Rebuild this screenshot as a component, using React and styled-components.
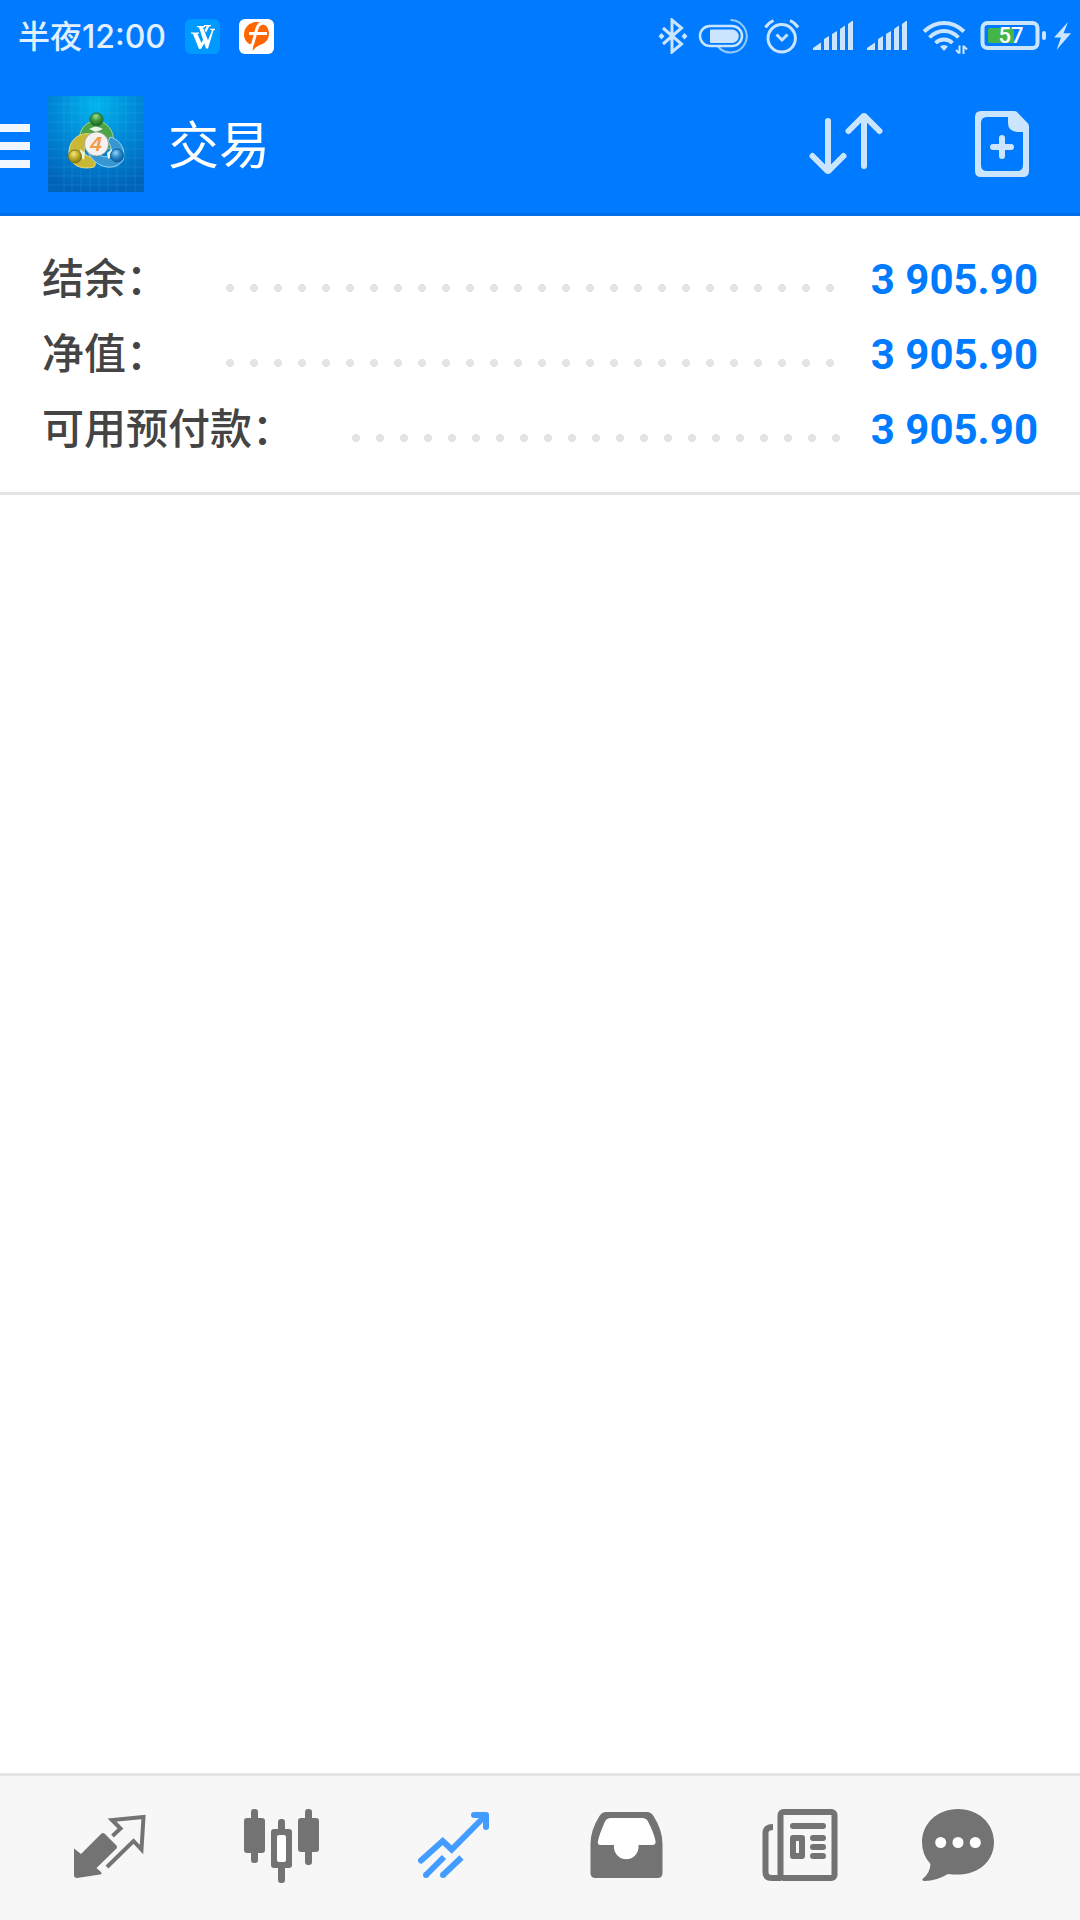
import React from "react";
import styled, { createGlobalStyle } from "styled-components";

// full-width colon after each label
const COLON = "\uFF1A";

const rows = [
  { label: "结余", value: "3 905.90" },
  { label: "净值", value: "3 905.90" },
  { label: "可用预付款", value: "3 905.90" },
];

const tabs = [
  { name: "行情", icon: QuotesIcon },
  { name: "图表", icon: ChartIcon },
  { name: "交易", icon: TradeIcon, active: true },
  { name: "历史", icon: InboxIcon },
  { name: "新闻", icon: NewsIcon },
  { name: "消息", icon: ChatIcon },
];

export default function App() {
  return (
    <Page lang="zh-CN">
      <GlobalStyle />
      <StatusBar>
        <StatusGroup $gap="19px">
          <Clock>半夜12:00</Clock>
          <WIcon />
          <FIcon />
        </StatusGroup>
        <StatusGroup $gap="8px">
          <BluetoothIcon />
          <ToggleIcon />
          <AlarmIcon />
          <SignalIcon />
          <SignalIcon />
          <WifiIcon />
          <BatteryIcon />
          <BoltIcon />
        </StatusGroup>
      </StatusBar>
      <AppBar>
        <MenuButton type="button" aria-label="菜单">
          <MenuBars>
            <span />
            <span />
            <span />
          </MenuBars>
          <AppLogo />
        </MenuButton>
        <h1>交易</h1>
        <ActionButton type="button" aria-label="排序">
          <SortIcon />
        </ActionButton>
        <ActionButton type="button" aria-label="新订单">
          <NewOrderIcon />
        </ActionButton>
      </AppBar>
      <Summary>
        {rows.map((row) => (
          <SummaryRow key={row.label}>
            <dt>{row.label + COLON}</dt>
            <Dots aria-hidden="true" />
            <dd>{row.value}</dd>
          </SummaryRow>
        ))}
      </Summary>
      <Content />
      <TabBar>
        {tabs.map(({ name, icon: Icon, active }) => (
          <TabButton
            key={name}
            type="button"
            aria-label={name}
            aria-current={active ? "page" : undefined}
            $active={active}
          >
            <Icon />
          </TabButton>
        ))}
      </TabBar>
    </Page>
  );
}

/* Status bar icons */

function WIcon() {
  return (
    <svg width="35" height="35" viewBox="0 0 35 35">
      <rect width="35" height="35" rx="6" fill="#0099ff" />
      <path
        fill="#fff"
        d="M6 13.500h8v1l-1.500.5l4 9l3-6.500l2 3l-5.500 9.500h-2L8 15l-2-.5Z"
      />
      <path
        fill="#fff"
        d="M12 7h8v1l-2 .7l5 12.500l4-10l-2-.5v-1h5v1l-1.500.7L23 29.500h-2L14 8.500l-2-.5ZM19 6h7v1l-2 .7l-3 6l-1.500-3L22 7.500l-3-.5Z"
      />
    </svg>
  );
}

function FIcon() {
  return (
    <svg width="35" height="35" viewBox="0 0 35 35">
      <rect width="35" height="35" rx="6" fill="#fff" />
      <path
        fill="#ff6600"
        d="M18 3c7 0 12 5 12 11.500c0 6-4 10-9 11.500c-3 1-5 3-7.500 6c.5-3 1-4 .5-5.500C8.500 25 5 21 5 15.500C5 8 11 3 18 3Z"
      />
      <path
        fill="none"
        stroke="#fff"
        strokeWidth="3"
        d="M28 5c-6-2-9 0-10.500 6L14 24c-1 3-3 4-6 4M10 14.500h18"
      />
    </svg>
  );
}

function BluetoothIcon() {
  return (
    <svg width="32" height="36" viewBox="0 0 32 36">
      <path
        d="M7 10L25.500 26L16 34V2L25.500 10L7 26"
        fill="none"
        stroke="currentColor"
        strokeWidth="3"
      />
      <path
        d="M5.500 15l3 3.300l-3 3.300l-3-3.300ZM28.500 15l3 3.300l-3 3.300l-3-3.300Z"
        fill="currentColor"
      />
    </svg>
  );
}

function ToggleIcon() {
  return (
    <svg width="60" height="36" viewBox="0 0 60 36" fill="none" stroke="currentColor">
      <path d="M34.500 2A16.200 16.200 0 1 1 22 28.500" strokeWidth="2" opacity="0.750" />
      <rect x="4" y="8" width="42" height="20" rx="10" strokeWidth="2.500" fill="#007aff" />
      <path
        d="M15 11.500h21a6.700 6.700 0 0 1 0 13.400H15a1 1 0 0 1-1-1V12.500a1 1 0 0 1 1-1Z"
        fill="currentColor"
        stroke="none"
      />
    </svg>
  );
}

function AlarmIcon() {
  return (
    <svg width="36" height="36" viewBox="0 0 36 36" fill="none" stroke="currentColor" strokeWidth="3">
      <circle cx="17.700" cy="20.300" r="13.700" />
      <path d="M12.500 16.500l5.500 5.500l5.500-5.500M1.500 9.500Q4 5 9.500 2.500M34 9.500Q31.500 5 26 2.500" />
    </svg>
  );
}

function SignalIcon() {
  return (
    <svg width="46" height="36" viewBox="0 0 46 36" fill="currentColor">
      <path d="M5 32v-2l8-5.500v7.500ZM16 32v-11l5-3v14ZM24 32v-16l5-3v19ZM32 32V11l5-3.500v24.500ZM40 32V6l4-3h1v29Z" />
    </svg>
  );
}

function WifiIcon() {
  return (
    <svg width="56" height="36" viewBox="0 0 56 36" fill="none" stroke="currentColor" strokeWidth="3.800">
      <path d="M8 13.500Q17 5 28 5T48 13.500" />
      <path d="M13.500 19.500Q20 13 28 13T42.500 19.500" />
      <path d="M19.500 25Q23 21.500 28 21.500T36.500 25" />
      <path d="M24 28.500q4-3 8 0l-4 4.500Z" fill="currentColor" stroke="none" />
      <path d="M43.500 35.500v-8M40 32l3.500 3.500M47.500 27.500v9M51 31.500l-3.500-3.500" strokeWidth="2" />
    </svg>
  );
}

function BatteryIcon() {
  return (
    <svg width="66" height="36" viewBox="0 0 66 36">
      <rect x="8" y="10" width="26" height="15" rx="2" fill="#44b549" />
      <rect
        x="2.500"
        y="5"
        width="55"
        height="25"
        rx="5"
        fill="none"
        stroke="currentColor"
        strokeWidth="4"
      />
      <rect x="62" y="13" width="4" height="9" rx="2" fill="currentColor" />
      <text
        x="31"
        y="25"
        fill="#fff"
        fontFamily="Roboto, sans-serif"
        fontSize="22"
        fontWeight="500"
        textAnchor="middle"
      >
        57
      </text>
    </svg>
  );
}

function BoltIcon() {
  return (
    <svg width="18" height="36" viewBox="0 0 18 36" fill="currentColor">
      <path d="M14 4L0 19.500h7L2.500 32L17 15.300H9.500Z" />
    </svg>
  );
}

/* App bar icons */

function AppLogo() {
  return (
    <svg width="96" height="96" viewBox="0 0 96 96">
      <defs>
        <radialGradient id="logoBg" cx="0.500" cy="0.100" r="0.900">
          <stop offset="0" stopColor="#00b4ec" />
          <stop offset="0.500" stopColor="#0087d6" />
          <stop offset="1" stopColor="#0063b8" />
        </radialGradient>
        <radialGradient id="logoGreen" cx="0.450" cy="0.250" r="0.700">
          <stop offset="0" stopColor="#9fdc9a" />
          <stop offset="0.500" stopColor="#3f9a3d" />
          <stop offset="1" stopColor="#1c6b22" />
        </radialGradient>
        <radialGradient id="logoYellow" cx="0.400" cy="0.300" r="0.700">
          <stop offset="0" stopColor="#f3ea80" />
          <stop offset="0.500" stopColor="#c0b02c" />
          <stop offset="1" stopColor="#85770f" />
        </radialGradient>
        <radialGradient id="logoBlue" cx="0.400" cy="0.300" r="0.700">
          <stop offset="0" stopColor="#9bd4f5" />
          <stop offset="0.500" stopColor="#2b8ccc" />
          <stop offset="1" stopColor="#0d5c9c" />
        </radialGradient>
      </defs>
      <rect width="96" height="96" fill="url(#logoBg)" />
      <path
        stroke="#5cc8f5"
        strokeOpacity="0.150"
        d="M16 0v96M24 0v96M33 0v96M42 0v96M51 0v96M60 0v96M69 0v96M78 0v96M87 0v96M0 8h96M0 17h96M0 26h96M0 35h96M0 44h96M0 53h96M0 62h96M0 71h96M0 80h96M0 89h96"
      />
      <g strokeWidth="1">
        <path
          fill="#4ba548"
          stroke="#a9d79c"
          d="M32 50C29 34 38 25 48 25S68 34 65 51C60 56 57 50 56 44S50 36 47 37S40 40 40 46Z"
        />
        <path
          fill="#c9b833"
          stroke="#e4dc86"
          d="M43 38C29 36 20 46 21 59C23 70 34 74 46 71C50 67 44 61 40 60C34 58 35 48 43 44Z"
        />
        <path
          fill="#3797d5"
          stroke="#9fd3f2"
          d="M62 41C73 44 78 54 75 64C69 75 48 74 40 56C46 53 50 60 57 61C64 60 65 51 60 46Z"
        />
      </g>
      <path d="M41 33l7-3l7 3l-7 3ZM32 53l5 4l-1 7l-3-3ZM64 53l-5 4l1 6l4-3Z" fill="#e8f4e8" />
      <circle cx="48.500" cy="23.500" r="6.500" fill="url(#logoGreen)" stroke="#1d6e2b" />
      <circle cx="27" cy="60.500" r="6.500" fill="url(#logoYellow)" stroke="#7d7319" />
      <circle cx="69" cy="59.500" r="6.500" fill="url(#logoBlue)" stroke="#0e5c97" />
      <circle cx="48.500" cy="48" r="12" fill="#f3f1f2" stroke="#8c8c80" strokeWidth="0.600" />
      <text
        x="48"
        y="55"
        fill="#f59a45"
        fontFamily="Liberation Sans, sans-serif"
        fontSize="21"
        fontWeight="700"
        fontStyle="italic"
        textAnchor="middle"
      >
        4
      </text>
    </svg>
  );
}

function SortIcon() {
  return (
    <svg
      width="96"
      height="96"
      viewBox="0 0 96 96"
      fill="none"
      stroke="currentColor"
      strokeWidth="6"
      strokeLinecap="round"
    >
      <path d="M30 25V75M14.500 60L30 75.500L45.500 60" strokeLinejoin="bevel" />
      <path d="M66 70V20M50.500 35L66 19.500L81.500 35" strokeLinejoin="bevel" />
    </svg>
  );
}

function NewOrderIcon() {
  return (
    <svg width="96" height="96" viewBox="0 0 96 96">
      <path
        fill="currentColor"
        fillRule="evenodd"
        d="M27 15H60Q62 15 63 16L74 27.500Q75 28.500 75 31V75Q75 81 69 81H27Q21 81 21 75V21Q21 15 27 15ZM33 21Q27 21 27 27V69Q27 75 33 75H63Q69 75 69 69V36H63Q54 35 54 27V21Z"
      />
      <path
        d="M48 42V60M39 51H57"
        stroke="currentColor"
        strokeWidth="6"
        strokeLinecap="round"
      />
    </svg>
  );
}

/* Tab bar icons */

function QuotesIcon() {
  return (
    <svg width="96" height="96" viewBox="0 0 96 96">
      <path
        fill="currentColor"
        d="M12 48.500L19 54L39 34Q41 32 43 34L54 45Q56 47 54 49L34.500 68L39 72Q40.500 74 38 74.500L15 78Q12 78 12 75Z"
      />
      <path
        fill="none"
        stroke="currentColor"
        strokeWidth="4"
        d="M50.500 36L58.500 28.500L50 20L81.500 17L79.500 49.500L71.500 41L45 67"
      />
    </svg>
  );
}

function ChartIcon() {
  return (
    <svg width="96" height="96" viewBox="0 0 96 96" fill="currentColor">
      <rect x="17" y="9" width="7" height="54" rx="3" />
      <rect x="10" y="18" width="21" height="35" rx="3" />
      <rect x="44" y="19" width="7" height="64" rx="3" />
      <rect x="37" y="29" width="21" height="39" rx="3" />
      <rect x="43" y="35" width="9" height="27" rx="2" fill="#fff" />
      <rect x="71" y="9" width="7" height="56" rx="3" />
      <rect x="64" y="18" width="21" height="34" rx="3" />
    </svg>
  );
}

function TradeIcon() {
  return (
    <svg width="96" height="96" viewBox="0 0 96 96" fill="none" stroke="currentColor" strokeWidth="6">
      <path d="M15 60.500L36.700 41L45.700 49.500L79 16" strokeLinecap="round" />
      <path d="M68 15H80V27" strokeLinecap="round" strokeLinejoin="round" />
      <path d="M20 75L38 57M37 75L55.500 57.500" />
      <g fill="currentColor" stroke="none">
        <circle cx="20" cy="75" r="3" />
        <circle cx="37" cy="75" r="3" />
        <path d="M72 15H80V24Z" />
      </g>
    </svg>
  );
}

function InboxIcon() {
  return (
    <svg width="96" height="96" viewBox="0 0 96 96">
      <path
        fill="currentColor"
        d="M28 12H69Q73 12 75.500 16Q84.500 30 84.500 44V73Q84.500 78 79.500 78H17.500Q12.500 78 12.500 73V44Q12.500 30 21.500 16Q24 12 28 12Z"
      />
      <path
        fill="#fff"
        d="M33 18H64Q68.500 18 70 21.500Q76 33 77.500 41Q78 45 74.500 45H60.500V48A12.300 12.300 0 0 1 36 48V45H22.500Q19 45 20 41Q21 35 27 21.500Q28.500 18 33 18Z"
      />
    </svg>
  );
}

function NewsIcon() {
  return (
    <svg width="96" height="96" viewBox="0 0 96 96" fill="none" stroke="currentColor" strokeWidth="6">
      <rect x="30.500" y="12" width="54" height="66" rx="3" />
      <path d="M23 27Q15.500 27 15.500 33V72Q15.500 78 21.500 78H31" />
      <path d="M43 26H73M63 38H73M63 47H73M63 56H73" strokeLinecap="round" />
      <rect x="43" y="38" width="9" height="18" strokeLinejoin="round" />
    </svg>
  );
}

function ChatIcon() {
  return (
    <svg width="96" height="96" viewBox="0 0 96 96">
      <path
        fill="currentColor"
        d="M36 9C57 9 72 24 72 42C72 62 55 78 26 74Q14 81 3 81Q-1 81 1 78.500Q8 73 8.500 64Q0 55 0 42C0 24 15 9 36 9Z"
      />
      <g fill="#fff">
        <circle cx="18.700" cy="42.500" r="5.500" />
        <circle cx="36" cy="42.500" r="5.500" />
        <circle cx="53.300" cy="42.500" r="5.500" />
      </g>
    </svg>
  );
}

const GlobalStyle = createGlobalStyle`
  * {
    box-sizing: border-box;
    margin: 0;
    padding: 0;
  }

  body {
    background-color: white;
    font-family: Roboto, "Noto Sans CJK SC", sans-serif;
  }

  button {
    border: none;
    background: none;
    color: inherit;
    cursor: pointer;
  }

  svg {
    display: block;
    flex-shrink: 0;
  }
`;

const Page = styled.div`
  display: flex;
  flex-direction: column;
  min-height: 100vh;
`;

const StatusBar = styled.div`
  display: flex;
  align-items: center;
  justify-content: space-between;
  height: 72px;
  padding: 0 8px 0 18px;
  background-color: #007aff;
  color: #cce5ff;
`;

const StatusGroup = styled.div`
  display: flex;
  align-items: center;
  gap: ${(props) => props.$gap};
`;

const Clock = styled.time`
  padding-top: 2px;
  font-family: Inter, "Noto Sans CJK SC", sans-serif;
  font-size: 32px;
  font-weight: 500;
  line-height: 40px;
  color: #e0f0ff;
`;

const AppBar = styled.header`
  display: flex;
  align-items: center;
  height: 144px;
  background-color: #007aff;
  box-shadow: inset 0 -3px #006ee6;
  color: #cce5ff;

  h1 {
    flex: 1;
    margin-left: 24px;
    padding-top: 6px;
    font-size: 51px;
    font-weight: 400;
    line-height: 72px;
    color: white;
  }
`;

const MenuButton = styled.button`
  display: flex;
  align-items: center;
  gap: 18px;
`;

const MenuBars = styled.span`
  display: flex;
  flex-direction: column;
  gap: 10px;
  width: 30px;
  padding-top: 4px;

  span {
    height: 8px;
    background-color: #f0f7ff;
  }
`;

const ActionButton = styled.button`
  display: flex;
  justify-content: center;
  width: 156px;
`;

const Summary = styled.dl`
  padding: 26px 42px 25px;
  border-bottom: 3px solid #e4e4e4;
`;

const SummaryRow = styled.div`
  display: flex;
  align-items: center;
  height: 75px;
  font-size: 42px;
  line-height: 75px;

  dt {
    font-weight: 500;
    color: #444;
  }

  dd {
    font-weight: 700;
    color: #007aff;
  }
`;

const Dots = styled.span`
  flex: 1;
  height: 8px;
  margin: 16px 26px 0 58px;
  background: radial-gradient(circle at 4px 4px, #e4e4e4 4px, transparent 4px)
    0 0 / 24px 8px repeat-x;
`;

const Content = styled.main`
  flex: 1;
`;

const TabBar = styled.nav`
  display: grid;
  grid-template-columns: repeat(6, 1fr);
  height: 147px;
  padding: 0 24px;
  border-top: 3px solid #e4e4e4;
  background-color: #f7f7f7;
`;

const TabButton = styled.button`
  display: flex;
  align-items: center;
  justify-content: center;
  color: ${(props) => (props.$active ? "#439cff" : "#737373")};
`;
